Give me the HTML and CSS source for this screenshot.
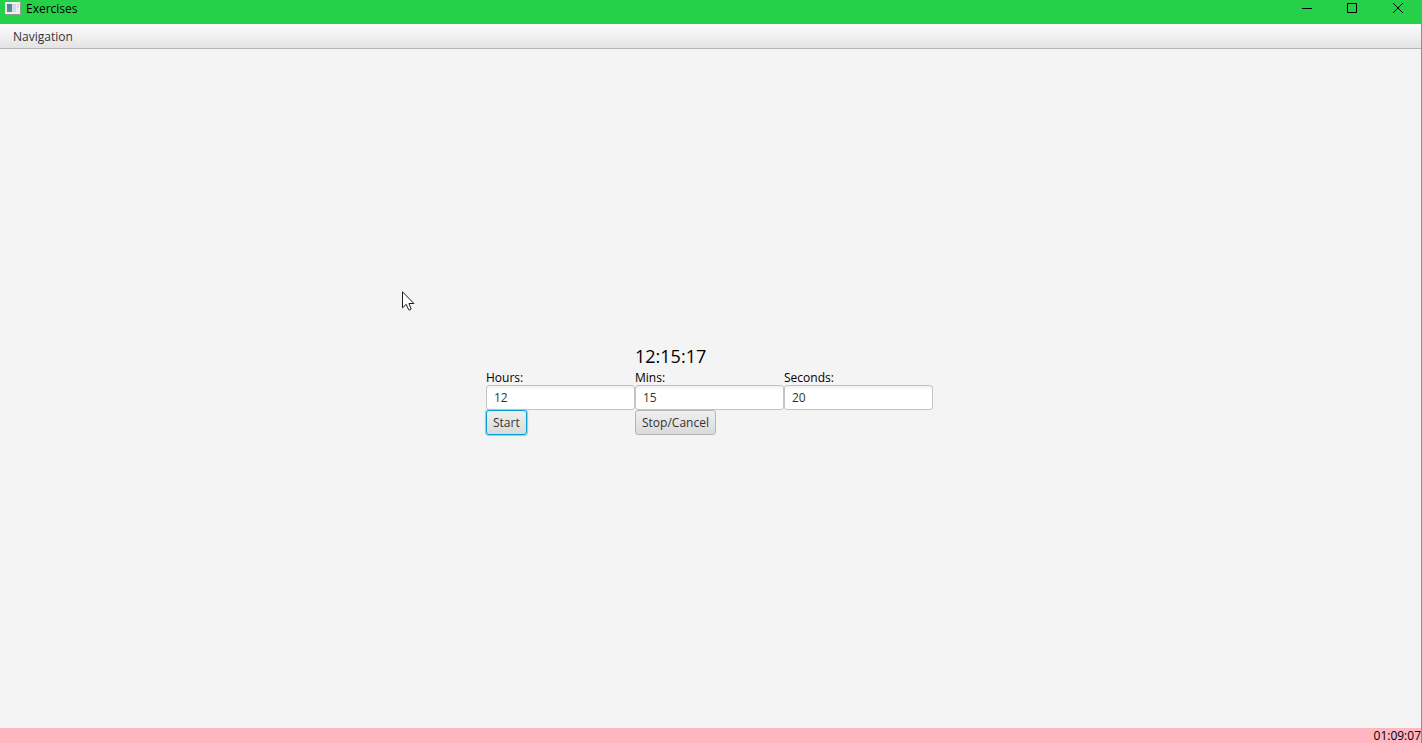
FILE: index.html
```html
<!DOCTYPE html>
<html lang="en">
<head>
<meta charset="utf-8">
<title>Exercises</title>
<link rel="stylesheet" href="styles.css">
</head>
<body>
<div class="window">
  <header class="titlebar">
    <svg class="app-icon" width="16" height="14" viewBox="0 0 16 14" aria-hidden="true">
      <defs><linearGradient id="pane" x1="0" y1="0" x2="1" y2="1"><stop offset="0" stop-color="#4a7aa6"/><stop offset="1" stop-color="#5a9a80"/></linearGradient></defs>
      <rect x="0" y="1" width="16" height="13" fill="#8f9f94"/>
      <rect x="0" y="1" width="15" height="12" fill="#f0eef3"/>
      <rect x="2" y="3" width="5" height="8" fill="url(#pane)"/>
      <rect x="7" y="3" width="4" height="8" fill="#cfdde3"/>
      <rect x="12" y="3" width="2" height="4" fill="#dcdcdc"/>
    </svg>
    <h1 class="title">Exercises</h1>
    <div class="controls">
      <button class="control" aria-label="Minimize"><svg width="12" height="12" viewBox="0 0 12 12"><path d="M2 6.5h10" /></svg></button>
      <button class="control" aria-label="Maximize"><svg width="12" height="12" viewBox="0 0 12 12"><path d="M1.500 1.500h9v9h-9z"/></svg></button>
      <button class="control" aria-label="Close"><svg width="12" height="12" viewBox="0 0 12 12"><path d="M1 1l10 10M11 1L1 11"/></svg></button>
    </div>
  </header>
  <div class="client">
    <nav class="menubar"><button class="menu">Navigation</button></nav>
    <main class="content">
      <form class="timer">
        <output class="clock">12:15:17</output>
        <div class="field"><label for="hours">Hours:</label><input id="hours" type="text" value="12"></div>
        <div class="field"><label for="mins">Mins:</label><input id="mins" type="text" value="15"></div>
        <div class="field"><label for="secs">Seconds:</label><input id="secs" type="text" value="20"></div>
        <button class="button primary" type="button">Start</button>
        <button class="button" type="button">Stop/Cancel</button>
      </form>
    </main>
    <footer class="status">01:09:07</footer>
  </div>
  <svg class="cursor" width="13" height="21" viewBox="0 0 13 21" aria-hidden="true"><path d="M.5.800v16l3.700-3.500 2.500 5.500q1.500.8 2.500-.8L6.900 12.500h5z" fill="#fff" stroke="#1c1c28"/></svg>
</div>
</body>
</html>
```
FILE: styles.css
```css
* { box-sizing: border-box; }
body {
  margin: 0;
  font: 12px/16px "Open Sans", "Noto Sans", sans-serif;
  color: #000;
}
button, input { font: inherit; }
.window {
  position: relative;
  display: flex;
  flex-direction: column;
  height: 100vh;
  overflow: hidden;
  background: #26d048;
}
.titlebar {
  display: flex;
  align-items: flex-start;
  height: 24px;
  padding: 0 1px 0 5px;
}
.app-icon { margin-top: 1px; }
.title {
  flex: 1;
  margin: 0 0 0 5px;
  font-size: 12px;
  line-height: 18px;
  font-weight: 400;
}
.controls { display: flex; }
.control {
  display: flex;
  align-items: center;
  justify-content: center;
  width: 46px;
  height: 16px;
  padding: 0;
  border: 0;
  background: none;
}
.control path { fill: none; stroke: #000; }
.client {
  flex: 1;
  display: flex;
  flex-direction: column;
  margin-right: 1px;
  background: #f4f4f4;
}
.menubar {
  display: flex;
  height: 25px;
  padding-left: 5px;
  border-bottom: 1px solid #b5b5b5;
  background: linear-gradient(#fdfdfd, #e3e3e3);
}
.menu {
  padding: 1px 8px 0;
  border: 0;
  background: none;
  color: #333;
}
.content {
  flex: 1;
  display: grid;
  place-items: center;
  padding-right: 2px;
}
.timer {
  display: grid;
  grid-template-columns: repeat(3, 149px);
}
.clock {
  grid-column: 2;
  font-size: 18px;
  line-height: 28px;
}
.field {
  display: flex;
  flex-direction: column;
  line-height: 15px;
}
.field:nth-of-type(1) { grid-column: 1; }
.field input {
  width: 100%;
  height: 25px;
  padding: 0 7px;
  border: 1px solid #c4c4c4;
  border-radius: 3px;
  background: linear-gradient(#f0f0f0, #fff 4px);
  color: #333;
}
.button {
  justify-self: start;
  height: 25px;
  padding: 0 6px;
  border: 1px solid #b5b5b5;
  border-radius: 3px;
  background: linear-gradient(#f0f0f0, #dadada);
  color: #333;
}
.primary {
  border-color: #039ed3;
  box-shadow: 0 0 1px 1px #8fd0ea;
}
.status {
  height: 15px;
  line-height: 16px;
  text-align: right;
  background: #ffb6c1;
}
.cursor {
  position: absolute;
  left: 402px;
  top: 291px;
}
```
